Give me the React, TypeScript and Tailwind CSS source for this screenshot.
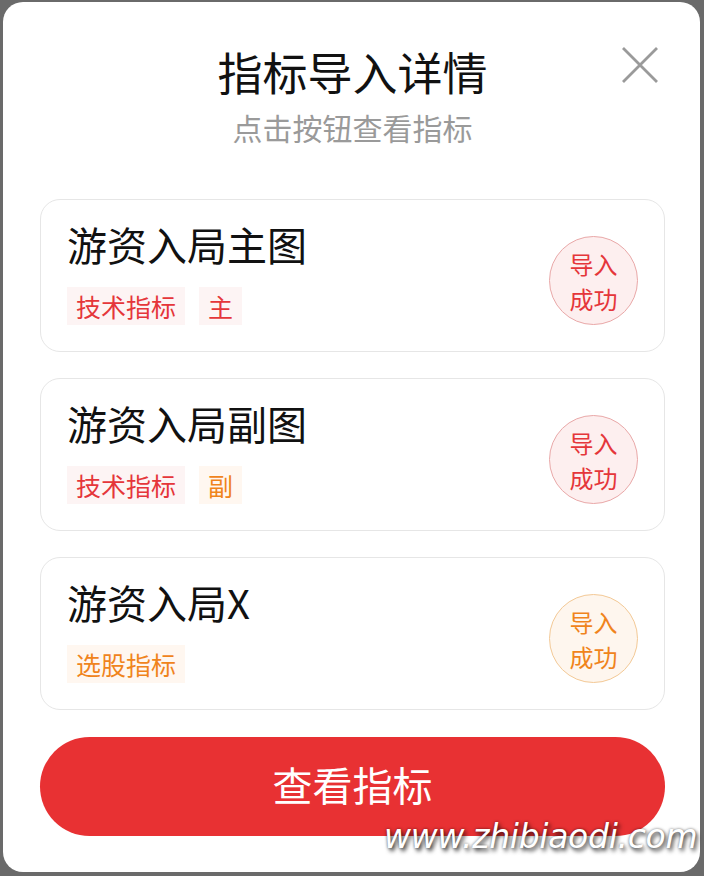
import React from "react";

const cjk = { fontFamily: '"Noto Sans CJK SC", "Noto Sans", sans-serif' };

type Tone = "red" | "orange";

function Tag({ text, tone }: { text: string; tone: Tone }) {
  const cls =
    tone === "red"
      ? "bg-[#fdf4f4] text-[#e5363a]"
      : "bg-[#fff7f0] text-[#f0841c]";
  return (
    <span className={`flex h-[38px] items-center px-[9px] text-[25px] leading-none ${cls}`}>
      {text}
    </span>
  );
}

function Badge({ tone }: { tone: Tone }) {
  const cls =
    tone === "red"
      ? "bg-[#fdefef] border-[#e9a8a8] text-[#e5363a]"
      : "bg-[#fef6ee] border-[#f3c996] text-[#f0841c]";
  return (
    <div
      className={`mt-[10px] flex h-[89px] w-[89px] flex-col items-center justify-center rounded-full border text-[24px] leading-[35px] ${cls}`}
    >
      <span>导入</span>
      <span>成功</span>
    </div>
  );
}

function Card({
  title,
  tags,
  badge,
}: {
  title: string;
  tags: { text: string; tone: Tone }[];
  badge: Tone;
}) {
  return (
    <div className="flex h-[153px] items-center justify-between rounded-[20px] border border-[#e6e6e6] bg-white pl-[26px] pr-[26px]">
      <div className="flex flex-col self-start pt-[20px]">
        <div className="h-[48px] text-[40px] leading-[48px] text-[#111111]">{title}</div>
        <div className="mt-[19px] flex gap-[14px]">
          {tags.map((t) => (
            <Tag key={t.text} text={t.text} tone={t.tone} />
          ))}
        </div>
      </div>
      <Badge tone={badge} />
    </div>
  );
}

export default function App() {
  return (
    <div className="relative h-[876px] w-[704px] overflow-hidden bg-[#6a6a6a]" style={cjk}>
      <div className="ml-[3px] mr-[4px] mt-[2px] flex h-[870px] flex-col rounded-[20px] bg-white pl-[37px] pr-[35px]">
        <div className="relative flex flex-col items-center pt-[43px]">
          <div className="h-[54px] text-[45px] leading-[54px] text-[#111111]">指标导入详情</div>
          <div className="mt-[10px] h-[36px] text-[30px] leading-[36px] text-[#9a9a9a]">
            点击按钮查看指标
          </div>
          <svg
            className="absolute right-[6px] top-[44px]"
            width="38"
            height="38"
            viewBox="0 0 38 38"
            fill="none"
            stroke="#9a9a9a"
            strokeWidth="2.8"
          >
            <path d="M2 2 L36 36 M36 2 L2 36" />
          </svg>
        </div>

        <div className="mt-[54px] flex flex-col gap-[26px]">
          <Card
            title="游资入局主图"
            tags={[
              { text: "技术指标", tone: "red" },
              { text: "主", tone: "red" },
            ]}
            badge="red"
          />
          <Card
            title="游资入局副图"
            tags={[
              { text: "技术指标", tone: "red" },
              { text: "副", tone: "orange" },
            ]}
            badge="red"
          />
          <Card title="游资入局X" tags={[{ text: "选股指标", tone: "orange" }]} badge="orange" />
        </div>

        <button className="mt-[27px] flex h-[99px] w-full items-center justify-center rounded-full bg-[#e83133] pb-[5px] text-[40px] text-white">
          查看指标
        </button>
      </div>

      <div
        className="absolute left-[384px] top-[817px] text-[33px] italic leading-[40px] text-white"
        style={{
          fontFamily: '"DejaVu Sans", sans-serif',
          textShadow: "2px 3px 4px rgba(0,0,0,0.75), 0 0 3px rgba(0,0,0,0.5)",
          letterSpacing: "-0.3px",
        }}
      >
        www.zhibiaodi.com
      </div>
    </div>
  );
}
